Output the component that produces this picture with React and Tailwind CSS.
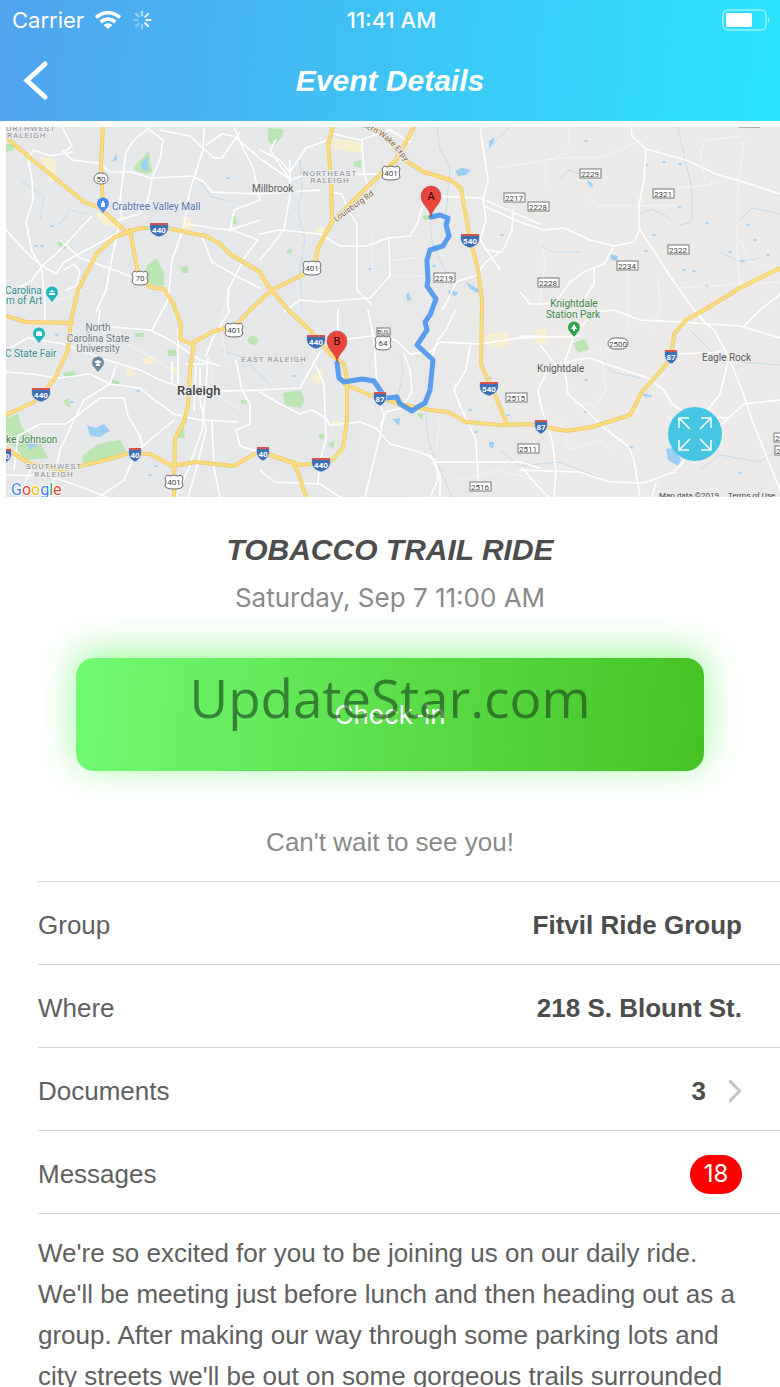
import { ChevronRight } from 'lucide-react';

const SANS = "font-['Liberation_Sans',Arial,sans-serif]";
const UI = "font-['Inter',sans-serif]";

const parks = [
  'M142 158 L149 152 L152 172 L145 174 L133 169Z',
  'M146 266 L156 258 L164 272 L164 286 L148 284Z',
  'M56 243 L64 241 L69 248 L62 249Z',
  'M180 267 L188 266 L188 273 L182 273Z',
  'M232 218 L236 216 L237 225 L231 223Z',
  'M6 418 L18 414 L22 428 L40 442 L48 458 L26 460 L14 446 L6 444Z',
  'M82 456 L98 444 L120 440 L126 452 L100 460 L84 464Z',
  'M268 128 L283 129 L282 137 L274 146 L268 141Z',
  'M353 162 L362 160 L361 168 L354 166Z',
  'M422 216 L434 214 L437 219 L424 220Z',
  'M283 393 L300 390 L305 400 L300 408 L285 405Z',
  'M247 340 L252 335 L259 339 L256 345 L250 344Z',
  'M167 350 L176 350 L177 356 L168 356Z',
  'M110 378 L120 382 L118 386 L110 383Z',
  'M64 400 L70 398 L70 408 L65 404Z',
  'M176 432 L184 428 L185 438 L178 438Z',
  'M417 413 L423 413 L423 420 L419 418Z',
  'M573 343 L585 339 L589 349 L578 353Z',
  'M328 443 L334 441 L334 448 L329 447Z',
  'M319 434 L325 434 L323 439 L319 439Z',
  'M287 250 L292 249 L291 254 L287 253Z',
  'M6 144 L14 144 L14 150 L6 152Z',
  'M134 333 L144 333 L143 337 L136 337Z',
  'M62 373 L74 371 L77 376 L66 379Z',
  'M241 400 L247 400 L246 404 L241 403Z',
];

const pale = [
  'M38 155 L55 160 L57 178 L50 182 L46 168Z',
  'M95 211 L112 219 L118 227 L106 225 L98 219Z',
  'M332 138 L363 142 L361 153 L345 151 L333 148Z',
  'M486 334 L508 332 L510 344 L498 349 L486 344Z',
  'M534 330 L546 328 L547 342 L536 345Z',
  'M142 358 L154 355 L153 364 L144 364Z',
  'M181 217 L190 218 L194 229 L184 230Z',
  'M317 227 L325 228 L324 234 L316 235Z',
  'M172 366 L180 368 L178 374 L172 372Z',
  'M332 420 L342 421 L340 427 L332 425Z',
  'M310 379 L322 368 L324 382 L316 384Z',
  'M125 370 L132 368 L136 376 L128 376Z',
];

const lakes = [
  'M141 163 L148 157 L148 171 L142 169Z',
  'M87 425 L95 428 L104 424 L110 431 L100 437 L90 436Z',
  'M24 439 L34 436 L38 444 L30 450Z',
  'M455 171 L462 168 L471 170 L466 175 L458 176Z',
  'M489 141 L495 137 L493 143 L489 149Z',
  'M610 254 L618 256 L617 261 L611 260Z',
  'M666 449 L674 447 L681 460 L678 466 L668 460Z',
  'M392 419 L400 418 L399 426Z',
  'M406 294 L409 292 L411 300 L407 301Z',
  'M448 290 L458 292 L456 296 L449 294Z',
  'M466 282 L480 290 L478 293 L470 289Z',
  'M587 180 L592 183 L593 188 L589 186Z',
  'M489 442 L494 442 L493 449 L489 446Z',
  'M643 394 L652 394 L651 397 L645 398Z',
  'M112 162 L116 154 L117 160Z',
];

const creeks = [
  'M437 127 L440 150 L450 166 L448 190 L446 215',
  'M510 127 L500 136 L492 146 L486 152',
  'M400 355 L403 372 L399 392 L390 399',
  'M426 413 L428 440 L440 470 L452 497',
  'M678 127 L684 155 L692 190 L692 222 L680 225',
  'M640 214 L652 209 L666 216 L672 222',
  'M430 222 L432 240 L440 260 L454 292',
  'M60 224 L70 210 L86 214',
  'M300 160 L302 190 L298 210 L305 240 L300 268 L302 310',
  'M740 220 L752 208 L780 214',
  'M720 252 L740 262 L760 258',
  'M560 180 L568 170 L586 176',
  'M540 245 L552 252 L580 252',
  'M690 330 L710 350 L742 362 L780 365',
  'M600 355 L612 372 L640 378',
  'M220 350 L240 356 L262 376 L276 392',
  'M700 470 L720 455 L760 462 L780 448',
  'M20 180 L44 196 L40 220',
  'M200 180 L210 196 L232 202',
  'M500 450 L520 466 L560 462 L600 478',
];

const ponds = [
  [664, 162], [680, 164], [646, 165], [679, 207], [707, 223], [586, 141], [646, 251], [654, 235],
  [755, 240], [748, 225], [730, 252], [684, 270], [694, 271], [707, 286], [742, 261], [768, 255],
  [470, 410], [476, 432], [490, 378], [586, 380], [631, 447], [706, 435], [586, 412], [36, 246],
  [42, 246], [52, 226], [228, 178], [220, 244], [370, 269], [434, 266], [502, 235], [88, 332],
  [57, 335], [150, 475], [156, 466], [294, 376], [72, 402], [138, 391], [508, 415], [740, 473],
];

const minorRoads = [
  'M498 168 L560 158 L600 158 L628 146 L640 141',
  'M569 127 L569 146 L558 158 L546 160 L546 185',
  'M590 200 L600 206 L678 206',
  'M705 180 L700 150 L706 140 L742 136',
  'M744 140 L738 188 L737 250 L740 290',
  'M655 190 L700 186 L738 178',
  'M540 240 L545 262 L540 300',
  'M628 270 L628 330', 'M658 276 L660 310 L648 330',
  'M680 288 L740 284 L780 282',
  'M740 240 L750 262 L780 270',
  'M600 345 L606 390 L596 405 L575 404',
  'M560 420 L570 450 L600 440 L612 450',
  'M640 400 L655 392 L672 396',
  'M380 248 L392 260 L420 258', 'M382 270 L395 276 L425 276', 'M372 235 L372 270',
  'M440 420 L436 450 L420 455', 'M445 380 L462 388',
  'M210 360 L214 392 L240 410', 'M120 340 L160 362 L186 384',
  'M30 280 L60 300 L82 290', 'M230 290 L220 320 L226 360',
  'M460 480 L500 470 L540 482', 'M700 400 L724 420 L722 450',
];

const roads = [
  'M62 127 L72 146 L64 152 M72 152 L50 156 L34 150 L28 158 L32 180 L33 200 L26 222 L32 252 L41 266 L45 300 L45 320',
  'M62 150 L72 160 L98 163 L110 172 L132 172 L150 178 L192 176 L204 182 L212 192 L260 194 L320 190',
  'M150 127 L134 140 L126 152 L120 200 L122 220',
  'M150 130 L163 140 L160 160 L152 178 L148 200 L140 214 L118 220',
  'M204 127 L203 150 L190 190 L184 226 L172 260 L168 300 L152 330',
  'M160 130 L190 136 L214 158 L222 158 L240 132',
  'M206 145 L222 134 L234 136 L262 160 L288 178',
  'M234 127 L244 150 L253 168 L260 200 L234 210 L230 232',
  'M6 230 L28 254 L42 266 L60 250 L92 216',
  'M42 266 L56 274 L64 262 L116 234',
  'M60 240 L80 258 L120 272 L134 278',
  'M42 266 L32 280 L6 296',
  'M64 270 L74 264 L80 272 L76 286 L66 290',
  'M118 230 L112 258 L106 290 L96 312',
  'M200 232 L212 262 L240 278 L260 288',
  'M232 230 L258 240 L246 255 L228 290 L228 310',
  'M188 224 L212 228 L230 230 L260 220',
  'M260 150 L280 160 L290 172 L306 148 L328 140',
  'M290 160 L290 196 L284 230 L260 260',
  'M276 140 L270 150 L290 180 L302 176 L326 174',
  'M260 234 L280 230 L320 234 L340 246 L366 246 L388 238 L410 236',
  'M330 192 L342 194 L348 210 L357 224 L357 290 L372 305',
  'M340 174 L384 174', 'M362 140 L364 174 L370 190 L366 200',
  'M334 134 L360 140 L390 130 L410 142',
  'M389 238 L390 276 L370 298 L320 302 L300 300 L284 312',
  'M410 236 L418 222 L424 200 L431 196 L480 198 L540 224',
  'M480 127 L488 180 L483 200 L486 220 L480 240 L500 270',
  'M484 206 L520 222 L544 230 L564 228 L590 240 L614 246 L634 242 L640 228',
  'M631 127 L632 136 L646 149 L686 160 L716 174 L750 184 L780 194',
  'M646 149 L644 180 L639 205 L639 228 L670 276 L694 310 L704 320',
  'M614 246 L604 264 L584 272 L570 282 L560 296 L546 304 L530 304 L520 292',
  'M594 268 L594 284 L586 296',
  'M480 238 L486 250 L502 252 L512 230 L513 210',
  'M500 252 L486 262 L475 276 L456 282 L448 300 L442 310',
  'M6 372 L30 374 L60 378 L90 374 L110 384 L140 388 L152 398 L174 414 L200 420 L238 422',
  'M6 350 L28 338 L64 344 L100 358 L140 370 L160 380 L194 392 L260 390 L300 388 L320 352',
  'M100 310 L98 326 L150 330 L170 340 L200 360 L220 366',
  'M116 366 L110 384 L84 400 L74 420 L60 450 L50 497',
  'M14 470 L18 436 L40 424 L66 424 L100 398 L124 398 L128 416 L140 436 L142 445',
  'M174 420 L150 440 L136 452 L124 480 L102 495',
  'M6 475 L50 476 L84 488 L106 497',
  'M30 470 L20 497',
  'M178 330 L178 386 M172 362 L172 384 M186 364 L206 364',
  'M208 358 L206 386 L202 430 L188 470 L176 497',
  'M200 368 L200 400 L206 430 L196 470 L188 497',
  'M196 366 L194 410',
  'M212 420 L214 468 L220 497',
  'M206 356 L212 340 L230 310',
  'M236 360 L242 390 L250 404 L250 424 L236 430 L240 446 L260 452',
  'M260 392 L280 404 L300 414 L312 410 L326 418 L330 425 L360 422 L376 428 L390 444 L420 452 L436 460 L438 480 L430 497',
  'M260 470 L274 482 L320 484 L340 497',
  'M316 366 L324 384 L326 440 L320 460 L318 484',
  'M324 347 L340 340 L372 336 L396 340 L410 354 L430 352 L440 342 L480 344 L520 338 L580 336',
  'M338 310 L338 340', 'M368 310 L374 340 L376 370 L378 400 L384 416 L380 436 L374 460 L365 497',
  'M380 426 L386 412 L402 408 L412 392 L410 370 L404 354',
  'M455 310 L446 330 L438 340 L432 356',
  'M470 346 L466 370 L454 390 L462 410 L476 440 L478 480',
  'M436 462 L520 462 L540 468', 'M430 455 L440 475 L440 497',
  'M520 336 L572 337 L594 312 L614 310 L640 320 L680 322 L740 326 L780 338',
  'M540 345 L552 360 L566 376 L568 394 L586 410 L604 428 L628 446 L634 460 L640 497',
  'M548 370 L538 390 L542 410 L552 440 L556 470 L554 497',
  'M574 336 L564 364 L574 360 L590 358 L612 366 L648 378 L664 390 L672 404 L690 416 L730 418',
  'M520 470 L580 472 L610 482 L644 483 L674 472 L690 454 L704 440 L722 424 L744 404 L780 400',
  'M522 468 L536 484 L548 497', 'M656 483 L652 497',
  'M698 316 L714 330 L728 356 L742 390 L752 420 L764 450 L780 490',
  'M728 362 L720 394 L706 412', 'M676 354 L722 352',
  'M780 294 L760 310 L744 326',
];

const highways = [
  'M6 137 L30 158 L60 182 L84 202 L100 208 L124 230',
  'M103 127 L101 165 L103 208',
  'M6 316 L26 322 L72 323',
  'M130 230 L138 273 L150 287 L164 289 L174 305 L181 325 L180 339 L192 344',
  'M6 415 L34 402 L54 380 L68 350 L71 320 L78 290 L97 253 L115 237 L140 228 L166 228 L206 236 L220 244 L230 254 L260 272 L268 286 L290 312 L310 330 L330 354 L344 364 L347 380 L347 420 L343 448 L330 462 L300 465 L280 458 L262 453',
  'M252 308 L236 325 L212 332 L194 342 L190 370 L188 405 L184 422 L175 438 L174 497',
  'M6 448 L28 463 L60 470 L98 462 L130 453 L150 454 L172 466 L196 462 L234 466 L260 451 L290 462',
  'M292 462 L298 472 L306 497',
  'M252 308 L272 290 L300 276 L314 270 L318 248 L332 222 L370 184 L396 160 L414 127',
  'M333 127 L328 144 L331 180 L332 222',
  'M362 120 L386 136 L406 161 L424 172 L450 180 L461 188 L464 206 L470 238 L478 270 L482 300 L481 365 L494 392 L506 422',
  'M344 384 L370 395 L400 404 L430 410 L448 412 L466 422 L500 425 L530 424 L566 431 L592 427 L630 415 L642 392 L658 374 L671 358 L674 334 L686 320 L704 310 L740 288 L780 268',
];

const route =
  'M431 217 L440 215 L448 218 L446 225 L449 236 L443 246 L430 250 L427 260 L428 280 L427 286 L436 299 L430 315 L425 322 L427 330 L417 345 L433 360 L430 390 L425 403 L416 408 L412 411 L400 404 L397 397 L386 398 L380 390 L374 381 L362 379 L344 382 L339 378 L337 363';

const interstates = [
  [159, 229, '440'], [316, 341, '440'], [41, 394, '440'], [321, 464, '440'], [470, 240, '540'],
  [489, 388, '540'], [135, 454, '40'], [263, 453, '40'], [5, 455, '40'], [380, 398, '87'],
  [541, 426, '87'], [671, 356, '87'],
];

const usRoutes = [
  [391, 173, '401'], [312, 268, '401'], [234, 330, '401'], [174, 482, '401'], [140, 278, '70'], [383, 343, '64'],
];

const stateRoutes = [
  [101, 179, 14, '50'], [618, 344, 20, '2500'],
];

const countyRoutes = [
  [590, 173, '2229'], [663, 193, '2321'], [514, 197, '2217'], [538, 206, '2228'], [678, 249, '2322'],
  [627, 265, '2234'], [548, 282, '2228'], [444, 277, '2219'], [516, 397, '2515'], [528, 448, '2511'],
  [480, 486, '2516'], [784, 437, '2320'], [785, 450, '2320'],
];

function Interstate({ x, y, label }) {
  const w = label.length > 2 ? 9 : 6;
  return (
    <g>
      <path
        d={`M${x - w} ${y - 6} H${x + w} C${x + w + 2} ${y + 2} ${x + w - 2} ${y + 6} ${x} ${y + 8} C${x - w + 2} ${y + 6} ${x - w - 2} ${y + 2} ${x - w} ${y - 6}Z`}
        fill="#3b70b5"
        stroke="#e9eef5"
        strokeWidth="0.6"
      />
      <path d={`M${x - w} ${y - 5} H${x + w}`} stroke="#d9534a" strokeWidth="2" />
      <text x={x} y={y + 4} textAnchor="middle" fontSize="8" fontWeight="700" fill="#fff">{label}</text>
    </g>
  );
}

function UsRoute({ x, y, label }) {
  const w = label.length > 2 ? 9 : 8;
  return (
    <g>
      <path
        d={`M${x - w + 2} ${y - 7} Q${x - w / 2} ${y - 5} ${x} ${y - 7} Q${x + w / 2} ${y - 5} ${x + w - 2} ${y - 7} L${x + w} ${y - 4} Q${x + w - 2} ${y} ${x + w} ${y + 4} Q${x + w - 1} ${y + 7} ${x} ${y + 7} Q${x - w + 1} ${y + 7} ${x - w} ${y + 4} Q${x - w + 2} ${y} ${x - w} ${y - 4}Z`}
        fill="#fff"
        stroke="#6b6b6b"
        strokeWidth="1"
      />
      <text x={x} y={y + 3} textAnchor="middle" fontSize="8" fill="#444">{label}</text>
    </g>
  );
}

function PlacePin({ x, y, color, children }) {
  return (
    <g>
      <path d={`M${x} ${y + 9} L${x - 4} ${y + 4} A6 6 0 1 1 ${x + 4} ${y + 4}Z`} fill={color} />
      {children}
    </g>
  );
}

function RoutePin({ x, y, label }) {
  return (
    <g>
      <path
        d={`M${x} ${y} C${x - 1} ${y - 9} ${x - 10} ${y - 12} ${x - 10} ${y - 21} A10 10 0 0 1 ${x + 10} ${y - 21} C${x + 10} ${y - 12} ${x + 1} ${y - 9} ${x} ${y}Z`}
        fill="#e8453c"
        stroke="#b3362c"
        strokeWidth="0.5"
      />
      <text x={x} y={y - 17} textAnchor="middle" fontSize="11" fill="#300">{label}</text>
    </g>
  );
}

function RouteMap() {
  return (
    <svg
      viewBox="6 127 774 370"
      className="block h-auto w-full bg-[#e8e8e8] font-['Roboto',sans-serif]"
      role="img"
      aria-label="Route map"
    >
      <defs>
        <linearGradient id="land">
          <stop offset="0.45" stopColor="#e6e7e8" />
          <stop offset="0.7" stopColor="#ebeae8" />
        </linearGradient>
        <path id="expy" d="M362 127 Q388 136 405 162" />
        <path id="louisburg" d="M336 222 L382 189" />
      </defs>
      <rect x="6" y="127" width="774" height="370" fill="url(#land)" />

      <g fill="#f7efd0">{pale.map(d => <path key={d} d={d} />)}</g>
      <g fill="#bce5b4">{parks.map(d => <path key={d} d={d} />)}</g>
      <g fill="#9dcff5">{lakes.map(d => <path key={d} d={d} />)}</g>
      <g fill="none" stroke="#c6dcec" strokeWidth="1">{creeks.map(d => <path key={d} d={d} />)}</g>
      <g fill="#a9d3f5">{ponds.map(([x, y]) => <ellipse key={`${x}-${y}`} cx={x} cy={y} rx="2" ry="1.3" />)}</g>

      <g fill="none" strokeLinejoin="round" strokeLinecap="round">
        <g stroke="#f6f6f5" strokeWidth="0.8">{minorRoads.map(d => <path key={d} d={d} />)}</g>
        <g stroke="#fff" strokeWidth="1.6">{roads.map(d => <path key={d} d={d} />)}</g>
        <g stroke="#f3c968" strokeWidth="4">{highways.map(d => <path key={d} d={d} />)}</g>
        <g stroke="#fcdc80" strokeWidth="2.6">{highways.map(d => <path key={d} d={d} />)}</g>
        <path d={route} stroke="#3f8ff0" strokeOpacity="0.85" strokeWidth="5" />
      </g>

      {interstates.map(([x, y, label]) => <Interstate key={`${x}-${y}`} x={x} y={y} label={label} />)}
      {usRoutes.map(([x, y, label]) => <UsRoute key={`${x}-${y}`} x={x} y={y} label={label} />)}
      {stateRoutes.map(([x, y, w, label]) => (
        <g key={label}>
          <rect x={x - w / 2} y={y - 6} width={w} height="11" rx="6" fill="#fff" stroke="#6b6b6b" />
          <text x={x} y={y + 3} textAnchor="middle" fontSize="8" fill="#444">{label}</text>
        </g>
      ))}
      {countyRoutes.map(([x, y, label]) => (
        <g key={`${x}-${y}`}>
          <rect x={x - 10} y={y - 4} width="21" height="9" fill="#fff" stroke="#777" />
          <text x={x} y={y + 4} textAnchor="middle" fontSize="8" fill="#444">{label}</text>
        </g>
      ))}
      <rect x="377" y="328" width="13" height="7" fill="#fff" stroke="#777" />
      <text x="383" y="334" textAnchor="middle" fontSize="6" fill="#444">BUS</text>
      <path d="M739 127 H760" stroke="#777" />

      <g stroke="#eceded" strokeWidth="2" paintOrder="stroke" strokeLinejoin="round">
        <g fontSize="8" fill="#8b8d98" letterSpacing="1">
          <text x="6" y="131">ORTHWEST</text>
          <text x="7" y="138">RALEIGH</text>
          <text x="330" y="176" textAnchor="middle">NORTHEAST</text>
          <text x="330" y="183" textAnchor="middle">RALEIGH</text>
          <text x="274" y="362" textAnchor="middle">EAST RALEIGH</text>
          <text x="54" y="469" textAnchor="middle">SOUTHWEST</text>
          <text x="54" y="477" textAnchor="middle">RALEIGH</text>
        </g>
        <g fontSize="10" fill="#5b5b5b">
          <text x="252" y="192">Millbrook</text>
          <text x="537" y="372">Knightdale</text>
          <text x="702" y="361">Eagle Rock</text>
          <g fill="#6e7a86" textAnchor="middle">
            <text x="98" y="331">North</text>
            <text x="98" y="342">Carolina State</text>
            <text x="98" y="352">University</text>
          </g>
          <text x="112" y="210" fill="#5577b8">Crabtree Valley Mall</text>
          <g fill="#2f8f92">
            <text x="5" y="294">Carolina</text>
            <text x="6" y="304">m of Art</text>
            <text x="5" y="357">C State Fair</text>
          </g>
          <g fill="#3b8a45">
            <text x="6" y="443">ke Johnson</text>
            <text x="574" y="307" textAnchor="middle">Knightdale</text>
            <text x="573" y="318" textAnchor="middle">Station Park</text>
          </g>
        </g>
        <text x="177" y="395" fontSize="13" fontWeight="500" fill="#444">Raleigh</text>
        <g fontSize="8" fill="#8a6234">
          <text><textPath href="#expy">hern Wake Expy</textPath></text>
          <text><textPath href="#louisburg">Louisburg Rd</textPath></text>
        </g>
        <g fontSize="8" fill="#444">
          <text x="659" y="498">Map data ©2019</text>
          <text x="728" y="498">Terms of Use</text>
        </g>
        <text x="11" y="495" fontSize="16" stroke="#fff">
          <tspan fill="#4285f4">G</tspan>
          <tspan fill="#ea4335">o</tspan>
          <tspan fill="#fbbc05">o</tspan>
          <tspan fill="#4285f4">g</tspan>
          <tspan fill="#34a853">l</tspan>
          <tspan fill="#ea4335">e</tspan>
        </text>
      </g>

      <PlacePin x={103} y={204} color="#4a8af4"><path d="M101 203 H105 V207 H101Z M102 203 V201 H104 V203" fill="#fff" /></PlacePin>
      <PlacePin x={52} y={293} color="#1fb5bd"><path d="M49 292 L52 290 L55 292Z M49 293 H55 V295 H49Z" fill="#fff" /></PlacePin>
      <PlacePin x={39} y={334} color="#1fb5bd"><path d="M36 336 V332 L39 331 L42 332 V336Z" fill="#fff" /></PlacePin>
      <PlacePin x={98} y={363} color="#6f8a9c"><path d="M94 362 L98 360 L102 362 L98 364Z M96 364 H100 V366 H96Z" fill="#fff" /></PlacePin>
      <PlacePin x={574} y={328} color="#2fa44c"><path d="M574 324 L577 329 H575 V331 H573 V329 H571Z" fill="#fff" /></PlacePin>

      <RoutePin x={431} y={217} label="A" />
      <RoutePin x={337} y={362} label="B" />
    </svg>
  );
}

function WifiIcon() {
  return (
    <svg width="26" height="18" viewBox="0 0 26 18" fill="none" stroke="#fff" strokeWidth="3.6" aria-hidden="true">
      <path d="M1 6.5 Q13 -3 25 6.5" />
      <path d="M5.5 11 Q13 5 20.500 11" />
      <path d="M13 18 L8.500 14 Q13 10.500 17.500 14Z" fill="#fff" stroke="none" />
    </svg>
  );
}

function Spinner() {
  const opacities = [0.55, 0.8, 1, 1, 0.35, 0.3, 0.35, 0.45];
  return (
    <svg width="20" height="20" viewBox="-10 -10 20 20" stroke="#fff" strokeWidth="2.2" strokeLinecap="round" aria-hidden="true">
      {opacities.map((o, i) => (
        <path key={i} d="M0 -4.5 V-8.5" opacity={o} transform={`rotate(${i * 45})`} />
      ))}
    </svg>
  );
}

function Battery() {
  return (
    <svg width="49" height="22" viewBox="0 0 49 22" aria-hidden="true">
      <rect x="1" y="1" width="43" height="20" rx="5" fill="none" stroke="#fff" strokeOpacity="0.5" strokeWidth="1.5" />
      <rect x="4" y="4" width="26" height="14" rx="2" fill="#fff" />
      <path d="M46 8 Q49 11 46 14Z" fill="#fff" fillOpacity="0.5" />
    </svg>
  );
}

function Row({ label, children }) {
  return (
    <div className="flex h-[83px] items-center justify-between border-t border-[#d8d8d8] pt-1 pr-[38px]">
      <dt>{label}</dt>
      <dd className="flex items-center font-bold text-[#4d4d4d]">{children}</dd>
    </div>
  );
}

export default function App() {
  return (
    <div className={`flex h-screen flex-col overflow-hidden bg-white text-[26px] text-[#606060] ${SANS}`}>
      <header className="shrink-0 bg-linear-[95deg] from-[#51a3ef] to-[#2be4fc] text-white">
        <div className={`grid h-10 grid-cols-3 items-center pr-[9px] pl-3 text-[22px] ${UI}`}>
          <div className="flex items-center gap-[11px]">
            <span>Carrier</span>
            <WifiIcon />
            <Spinner />
          </div>
          <span className="text-center font-medium">11:41 AM</span>
          <div className="flex justify-end"><Battery /></div>
        </div>
        <div className="grid h-[81px] grid-cols-[80px_1fr_80px] items-center">
          <button type="button" aria-label="Back" className="pl-[22px]">
            <svg width="28" height="42" viewBox="0 0 28 42" fill="none" stroke="#fff" strokeWidth="5" strokeLinecap="round" strokeLinejoin="miter">
              <path d="M23 4 L5 20.500 L23 37" />
            </svg>
          </button>
          <h1 className="text-center text-[30px] font-bold italic">Event Details</h1>
        </div>
      </header>

      <main className="flex-1 overflow-y-auto [scrollbar-width:none]">
        <div className="relative pt-[6px] pl-[6px]">
          <RouteMap />
          <button
            type="button"
            aria-label="Full screen map"
            className="absolute right-[58px] bottom-9 flex size-[54px] items-center justify-center rounded-full bg-[#46c5e3]"
          >
            <svg width="36" height="36" viewBox="0 0 36 36" fill="none" stroke="#fff" strokeWidth="1.5">
              <path d="M13 13 L2 2 M2 12 V2 H12" />
              <path d="M23 13 L34 2 M24 2 H34 V12" />
              <path d="M13 23 L2 34 M2 24 V34 H12" />
              <path d="M23 23 L34 34 M24 34 H34 V24" />
            </svg>
          </button>
        </div>

        <section className="pt-[33px] text-center text-[#8a8a8a]">
          <h2 className="text-[30px] leading-10 font-bold text-[#4d4d4d] italic">TOBACCO TRAIL RIDE</h2>
          <p className={`pt-2 leading-10 ${UI}`}>Saturday, Sep 7 11:00 AM</p>
          <div className="relative mx-[76px] mt-10">
            <button
              type="button"
              className={`h-[113px] w-full rounded-[18px] bg-linear-[95deg] from-[#72fa74] to-[#46c323] text-white shadow-[0_-6px_36px_rgba(90,240,90,0.6)] ${UI}`}
            >
              Check-in
            </button>
            <span className="pointer-events-none absolute inset-x-0 top-0 font-['Open_Sans',sans-serif] text-[53px] leading-20 text-[#1d4a20]/65">
              UpdateStar.com
            </span>
          </div>
          <p className="pt-[51px] pb-[19px] leading-10">Can't wait to see you!</p>
        </section>

        <dl className="pl-[38px]">
          <Row label="Group">Fitvil Ride Group</Row>
          <Row label="Where">218 S. Blount St.</Row>
          <Row label="Documents">
            3
            <a href="#documents" aria-label="Open documents" className="-mr-3 ml-[10px]">
              <ChevronRight size={38} strokeWidth={2} className="text-[#c4c4c4]" />
            </a>
          </Row>
          <Row label="Messages">
            <span className={`flex h-[39px] w-[52px] items-center justify-center rounded-full bg-[#fe0000] text-[24px] font-normal text-white ${UI}`}>18</span>
          </Row>
        </dl>
        <p className="ml-[38px] border-t border-[#d8d8d8] pt-[19px] pr-[38px] leading-[41px]">
          We're so excited for you to be joining us on our daily ride. We'll be meeting just before lunch
          and then heading out as a group. After making our way through some parking lots and city streets
          we'll be out on some gorgeous trails surrounded
        </p>
      </main>
    </div>
  );
}
